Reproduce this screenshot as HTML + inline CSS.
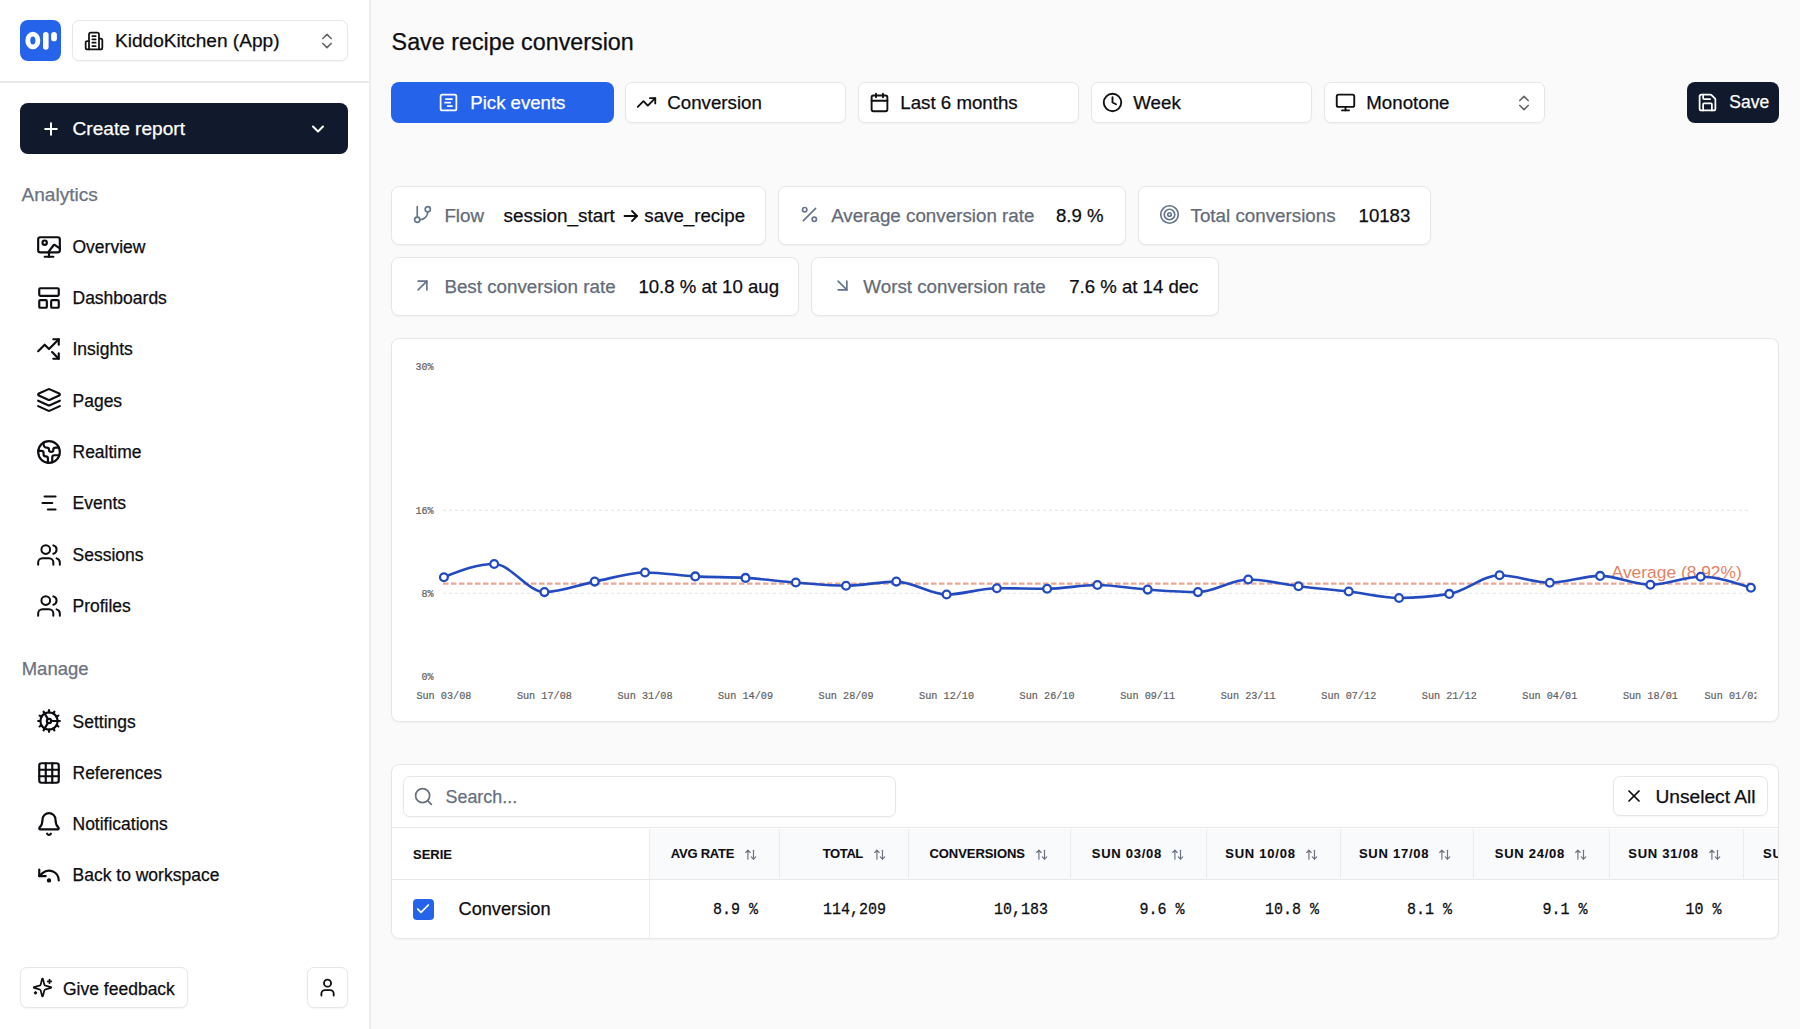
<!DOCTYPE html><html><head><meta charset="utf-8"><style>
*{box-sizing:border-box;margin:0;padding:0}
html,body{width:1800px;height:1029px;overflow:hidden;background:#fafafa;font-family:"Liberation Sans",sans-serif;color:#0b0b0f}
.abs{position:absolute}
svg{display:block}
.ic{position:absolute;fill:none;stroke:currentColor;stroke-width:2;stroke-linecap:round;stroke-linejoin:round;overflow:visible}
.txt{position:absolute;white-space:nowrap;line-height:1;-webkit-text-stroke:0.25px currentColor}
.box{position:absolute;background:#fff;border:1.5px solid #e7e7e7;border-radius:7px;box-shadow:0 1px 2px rgba(0,0,0,0.04)}
</style></head><body>
<div class="abs" style="left:0;top:0;width:371px;height:1029px;background:#fff;border-right:2px solid #ededed"></div>
<div class="abs" style="left:20px;top:20px;width:41px;height:41px;background:#2563eb;border-radius:8px"></div>
<svg class="abs" style="left:20px;top:20px" width="41" height="41" viewBox="0 0 41 41"><ellipse cx="12.85" cy="20.5" rx="5.0" ry="6.4" fill="none" stroke="#fff" stroke-width="4.9"/><rect x="23" y="11.9" width="5.6" height="17.9" rx="2.8" fill="#fff"/><rect x="31.1" y="11.9" width="5.8" height="9.4" rx="2.9" fill="#fff"/></svg>
<div class="box" style="left:72px;top:20px;width:276px;height:41px"></div>
<svg class="ic" style="left:83.6px;top:30.6px;width:20px;height:20px;color:#111;stroke-width:2.1" viewBox="0 0 24 24"><path d="M6 22V4a2 2 0 0 1 2-2h8a2 2 0 0 1 2 2v18Z"/><path d="M6 12H4a2 2 0 0 0-2 2v6a2 2 0 0 0 2 2h2"/><path d="M18 9h2a2 2 0 0 1 2 2v9a2 2 0 0 1-2 2h-2"/><path d="M10 6h4"/><path d="M10 10h4"/><path d="M10 14h4"/><path d="M10 18h4"/></svg>
<div class="txt" style="left:115px;top:31.23px;font-size:19.1px;color:#0d0d12;font-weight:normal;">KiddoKitchen (App)</div>
<svg class="ic" style="left:316.5px;top:30.6px;width:20px;height:20px;color:#666;stroke-width:2.0" viewBox="0 0 24 24"><path d="m7 15 5 5 5-5"/><path d="m7 9 5-5 5 5"/></svg>
<div class="abs" style="left:0;top:81px;width:369px;height:1.5px;background:#e8e8e8"></div>
<div class="abs" style="left:20px;top:103px;width:328px;height:51px;background:#111a2d;border-radius:8px"></div>
<svg class="ic" style="left:41px;top:119px;width:20px;height:20px;color:#fff;stroke-width:2.4" viewBox="0 0 24 24"><path d="M5 12h14"/><path d="M12 5v14"/></svg>
<div class="txt" style="left:72.5px;top:119.13px;font-size:19.1px;color:#fff;font-weight:normal;">Create report</div>
<svg class="ic" style="left:308px;top:119px;width:20px;height:20px;color:#fff;stroke-width:2.4" viewBox="0 0 24 24"><path d="m6 9 6 6 6-6"/></svg>
<div class="txt" style="left:21.5px;top:185.03px;font-size:19.1px;color:#6b7280;font-weight:normal;">Analytics</div>
<svg class="ic" style="left:35.9px;top:233.5px;width:26px;height:26px;color:#0d0d12;stroke-width:2.0" viewBox="0 0 24 24"><rect width="20" height="14" x="2" y="3" rx="2"/><circle cx="8" cy="8" r="2"/><path d="M11.2 17l4.8-6.4a1.2 1.2 0 0 1 1.9-.1L22 13.2"/><path d="M12 17v4"/><path d="M8 21h8"/></svg>
<div class="txt" style="left:72.5px;top:238.79px;font-size:17.5px;color:#0d0d12;font-weight:normal;">Overview</div>
<svg class="ic" style="left:35.9px;top:284.79999999999995px;width:26px;height:26px;color:#0d0d12;stroke-width:2.0" viewBox="0 0 24 24"><rect width="18" height="7" x="3" y="3" rx="1"/><rect width="7" height="7" x="3" y="14" rx="1"/><rect width="7" height="7" x="14" y="14" rx="1"/></svg>
<div class="txt" style="left:72.5px;top:290.09px;font-size:17.5px;color:#0d0d12;font-weight:normal;">Dashboards</div>
<svg class="ic" style="left:35.9px;top:336.09999999999997px;width:26px;height:26px;color:#0d0d12;stroke-width:2.0" viewBox="0 0 24 24"><path d="M14.828 14.828 21 21"/><path d="M21 16v5h-5"/><path d="m21 3-9 9-4-4-6 6"/><path d="M21 8V3h-5"/></svg>
<div class="txt" style="left:72.5px;top:341.39px;font-size:17.5px;color:#0d0d12;font-weight:normal;">Insights</div>
<svg class="ic" style="left:35.9px;top:387.4px;width:26px;height:26px;color:#0d0d12;stroke-width:2.0" viewBox="0 0 24 24"><path d="m12.83 2.18a2 2 0 0 0-1.66 0L2.6 6.08a1 1 0 0 0 0 1.83l8.58 3.91a2 2 0 0 0 1.66 0l8.58-3.9a1 1 0 0 0 0-1.83Z"/><path d="m22 17.65-9.17 4.16a2 2 0 0 1-1.66 0L2 17.65"/><path d="m22 12.65-9.17 4.16a2 2 0 0 1-1.66 0L2 12.65"/></svg>
<div class="txt" style="left:72.5px;top:392.69px;font-size:17.5px;color:#0d0d12;font-weight:normal;">Pages</div>
<svg class="ic" style="left:35.9px;top:438.69999999999993px;width:26px;height:26px;color:#0d0d12;stroke-width:2.0" viewBox="0 0 24 24"><path d="M21.54 15H17a2 2 0 0 0-2 2v4.54"/><path d="M7 3.34V5a3 3 0 0 0 3 3a2 2 0 0 1 2 2c0 1.1.9 2 2 2a2 2 0 0 0 2-2c0-1.1.9-2 2-2h3.17"/><path d="M11 21.95V18a2 2 0 0 0-2-2a2 2 0 0 1-2-2v-1a2 2 0 0 0-2-2H2.05"/><circle cx="12" cy="12" r="10"/></svg>
<div class="txt" style="left:72.5px;top:443.99px;font-size:17.5px;color:#0d0d12;font-weight:normal;">Realtime</div>
<svg class="ic" style="left:35.9px;top:490.0px;width:26px;height:26px;color:#0d0d12;stroke-width:2.0" viewBox="0 0 24 24"><path d="M8 6h10"/><path d="M6 12h9"/><path d="M11 18h7"/></svg>
<div class="txt" style="left:72.5px;top:495.29px;font-size:17.5px;color:#0d0d12;font-weight:normal;">Events</div>
<svg class="ic" style="left:35.7px;top:541.9px;width:26px;height:26px;color:#0d0d12;stroke-width:1.85" viewBox="0 0 24 24"><path d="M16 21v-2a4 4 0 0 0-4-4H6a4 4 0 0 0-4 4v2"/><circle cx="9" cy="7" r="4"/><path d="M22 21v-2a4 4 0 0 0-3-3.87"/><path d="M16 3.13a4 4 0 0 1 0 7.75"/></svg>
<div class="txt" style="left:72.5px;top:546.59px;font-size:17.5px;color:#0d0d12;font-weight:normal;">Sessions</div>
<svg class="ic" style="left:35.7px;top:593.1999999999999px;width:26px;height:26px;color:#0d0d12;stroke-width:1.85" viewBox="0 0 24 24"><path d="M16 21v-2a4 4 0 0 0-4-4H6a4 4 0 0 0-4 4v2"/><circle cx="9" cy="7" r="4"/><path d="M22 21v-2a4 4 0 0 0-3-3.87"/><path d="M16 3.13a4 4 0 0 1 0 7.75"/></svg>
<div class="txt" style="left:72.5px;top:597.89px;font-size:17.5px;color:#0d0d12;font-weight:normal;">Profiles</div>
<div class="txt" style="left:21.7px;top:659.84px;font-size:18.5px;color:#6b7280;font-weight:normal;">Manage</div>
<svg class="ic" style="left:35.9px;top:708.3px;width:26px;height:26px;color:#0d0d12;stroke-width:2.0" viewBox="0 0 24 24"><path d="M12 20a8 8 0 1 0 0-16 8 8 0 0 0 0 16Z"/><path d="M12 14a2 2 0 1 0 0-4 2 2 0 0 0 0 4Z"/><path d="M12 2v2"/><path d="M12 22v-2"/><path d="m17 20.66-1-1.73"/><path d="M11 10.27 7 3.34"/><path d="m20.66 17-1.73-1"/><path d="m3.34 7 1.73 1"/><path d="M14 12h8"/><path d="M2 12h2"/><path d="m20.66 7-1.73 1"/><path d="m3.34 17 1.73-1"/><path d="m17 3.34-1 1.73"/><path d="m11 13.73-4 6.93"/></svg>
<div class="txt" style="left:72.5px;top:713.59px;font-size:17.5px;color:#0d0d12;font-weight:normal;">Settings</div>
<svg class="ic" style="left:35.9px;top:759.5999999999999px;width:26px;height:26px;color:#0d0d12;stroke-width:2.0" viewBox="0 0 24 24"><rect width="18" height="18" x="3" y="3" rx="2"/><path d="M3 9h18"/><path d="M3 15h18"/><path d="M9 3v18"/><path d="M15 3v18"/></svg>
<div class="txt" style="left:72.5px;top:764.89px;font-size:17.5px;color:#0d0d12;font-weight:normal;">References</div>
<svg class="ic" style="left:35.9px;top:810.9px;width:26px;height:26px;color:#0d0d12;stroke-width:2.0" viewBox="0 0 24 24"><path d="M10.268 21a2 2 0 0 0 3.464 0"/><path d="M3.262 15.326A1 1 0 0 0 4 17h16a1 1 0 0 0 .74-1.673C19.41 13.956 18 12.499 18 8A6 6 0 0 0 6 8c0 4.499-1.411 5.956-2.738 7.326"/></svg>
<div class="txt" style="left:72.5px;top:816.19px;font-size:17.5px;color:#0d0d12;font-weight:normal;">Notifications</div>
<svg class="ic" style="left:35.9px;top:862.1999999999999px;width:26px;height:26px;color:#0d0d12;stroke-width:2.0" viewBox="0 0 24 24"><path d="M21 17a9 9 0 0 0-15-6.7L3 13"/><path d="M3 7v6h6"/><circle cx="12" cy="17" r="1"/></svg>
<div class="txt" style="left:72.5px;top:867.49px;font-size:17.5px;color:#0d0d12;font-weight:normal;">Back to workspace</div>
<div class="box" style="left:20px;top:967px;width:168px;height:41px"></div>
<svg class="ic" style="left:32px;top:977px;width:21px;height:21px;color:#111;stroke-width:2" viewBox="0 0 24 24"><path d="M9.937 15.5A2 2 0 0 0 8.5 14.063l-6.135-1.582a.5.5 0 0 1 0-.962L8.5 9.936A2 2 0 0 0 9.937 8.5l1.582-6.135a.5.5 0 0 1 .963 0L14.063 8.5A2 2 0 0 0 15.5 9.937l6.135 1.581a.5.5 0 0 1 0 .964L15.5 14.063a2 2 0 0 0-1.437 1.437l-1.582 6.135a.5.5 0 0 1-.963 0z"/><path d="M20 3v4"/><path d="M22 5h-4"/><path d="M4 17v2"/><path d="M5 18H3"/></svg>
<div class="txt" style="left:63px;top:981.19px;font-size:17.5px;color:#0d0d12;font-weight:normal;">Give feedback</div>
<div class="box" style="left:307px;top:967px;width:41px;height:41px"></div>
<svg class="ic" style="left:317.1px;top:976.9px;width:21.1px;height:21.1px;color:#111;stroke-width:2.1" viewBox="0 0 24 24"><path d="M19 21v-2a4 4 0 0 0-4-4H9a4 4 0 0 0-4 4v2"/><circle cx="12" cy="7" r="4"/></svg>
<div class="txt" style="left:391.6px;top:30.88px;font-size:23.3px;color:#0d0d12;font-weight:normal;">Save recipe conversion</div>
<div class="abs" style="left:391px;top:82px;width:223px;height:41px;background:#2563eb;border-radius:8px"></div>
<svg class="ic" style="left:438px;top:92px;width:21px;height:21px;color:#fff;stroke-width:2" viewBox="0 0 24 24"><rect width="18" height="18" x="3" y="3" rx="2"/><path d="M9 8h7"/><path d="M8 12h6"/><path d="M11 16h5"/></svg>
<div class="txt" style="left:470.3px;top:93.76px;font-size:18.6px;color:#fff;font-weight:normal;">Pick events</div>
<div class="box" style="left:625px;top:82px;width:221px;height:41px"></div>
<svg class="ic" style="left:636px;top:92px;width:21px;height:21px;color:#111;stroke-width:2.15" viewBox="0 0 24 24"><polyline points="22 7 13.5 15.5 8.5 10.5 2 17"/><polyline points="16 7 22 7 22 13"/></svg>
<div class="txt" style="left:667.3px;top:93.67px;font-size:18.7px;color:#0d0d12;font-weight:normal;">Conversion</div>
<div class="box" style="left:858px;top:82px;width:221px;height:41px"></div>
<svg class="ic" style="left:869px;top:92px;width:21px;height:21px;color:#111;stroke-width:2.15" viewBox="0 0 24 24"><path d="M8 2v4"/><path d="M16 2v4"/><rect width="18" height="18" x="3" y="4" rx="2"/><path d="M3 10h18"/></svg>
<div class="txt" style="left:900.3px;top:93.67px;font-size:18.7px;color:#0d0d12;font-weight:normal;">Last 6 months</div>
<div class="box" style="left:1091px;top:82px;width:221px;height:41px"></div>
<svg class="ic" style="left:1102px;top:92px;width:21px;height:21px;color:#111;stroke-width:2.15" viewBox="0 0 24 24"><circle cx="12" cy="12" r="10"/><polyline points="12 6 12 12 16 14"/></svg>
<div class="txt" style="left:1133.3px;top:93.67px;font-size:18.7px;color:#0d0d12;font-weight:normal;">Week</div>
<div class="box" style="left:1324px;top:82px;width:221px;height:41px"></div>
<svg class="ic" style="left:1335px;top:92px;width:21px;height:21px;color:#111;stroke-width:2.15" viewBox="0 0 24 24"><rect width="20" height="14" x="2" y="3" rx="2"/><line x1="8" x2="16" y1="21" y2="21"/><line x1="12" x2="12" y1="17" y2="21"/></svg>
<div class="txt" style="left:1366.3px;top:93.67px;font-size:18.7px;color:#0d0d12;font-weight:normal;">Monotone</div>
<svg class="ic" style="left:1514px;top:93.3px;width:20px;height:20px;color:#666;stroke-width:2.0" viewBox="0 0 24 24"><path d="m7 15 5 5 5-5"/><path d="m7 9 5-5 5 5"/></svg>
<div class="abs" style="left:1687px;top:82px;width:92px;height:41px;background:#111a2d;border-radius:8px"></div>
<svg class="ic" style="left:1697px;top:92px;width:21px;height:21px;color:#fff;stroke-width:2" viewBox="0 0 24 24"><path d="M15.2 3a2 2 0 0 1 1.4.6l3.8 3.8a2 2 0 0 1 .6 1.4V19a2 2 0 0 1-2 2H5a2 2 0 0 1-2-2V5a2 2 0 0 1 2-2z"/><path d="M17 21v-7a1 1 0 0 0-1-1H8a1 1 0 0 0-1 1v7"/><path d="M7 3v4a1 1 0 0 0 1 1h7"/></svg>
<div class="txt" style="left:1729.3px;top:94.49px;font-size:17.5px;color:#fff;font-weight:normal;">Save</div>
<div class="box" style="left:391px;top:186px;width:375px;height:59px;border-radius:8px"></div>
<svg class="ic" style="left:411.8px;top:204.3px;width:21px;height:21px;color:#64748b;stroke-width:1.9" viewBox="0 0 24 24"><line x1="6" x2="6" y1="3" y2="15"/><circle cx="18" cy="6" r="3"/><circle cx="6" cy="18" r="3"/><path d="M18 9a9 9 0 0 1-9 9"/></svg>
<div class="txt" style="left:444.4px;top:207.09px;font-size:18.8px;color:#636b78;font-weight:normal;">Flow</div>
<div class="box" style="left:778px;top:186px;width:348px;height:59px;border-radius:8px"></div>
<svg class="ic" style="left:798.8px;top:204.3px;width:21px;height:21px;color:#64748b;stroke-width:1.9" viewBox="0 0 24 24"><line x1="19" x2="5" y1="5" y2="19"/><circle cx="6.5" cy="6.5" r="2.5"/><circle cx="17.5" cy="17.5" r="2.5"/></svg>
<div class="txt" style="left:831.2px;top:207.09px;font-size:18.8px;color:#636b78;font-weight:normal;">Average conversion rate</div>
<div class="txt" style="left:1056px;top:207.26px;font-size:18.6px;color:#0d0d12;font-weight:normal;">8.9 %</div>
<div class="box" style="left:1138px;top:186px;width:293px;height:59px;border-radius:8px"></div>
<svg class="ic" style="left:1158.8px;top:204.3px;width:21px;height:21px;color:#64748b;stroke-width:1.9" viewBox="0 0 24 24"><circle cx="12" cy="12" r="10"/><circle cx="12" cy="12" r="6"/><circle cx="12" cy="12" r="2"/></svg>
<div class="txt" style="left:1190.5px;top:207.09px;font-size:18.8px;color:#636b78;font-weight:normal;">Total conversions</div>
<div class="txt" style="left:1358.6px;top:207.26px;font-size:18.6px;color:#0d0d12;font-weight:normal;">10183</div>
<div class="box" style="left:391px;top:257px;width:408px;height:59px;border-radius:8px"></div>
<svg class="ic" style="left:411.8px;top:275.3px;width:21px;height:21px;color:#64748b;stroke-width:1.9" viewBox="0 0 24 24"><path d="M7 7h10v10"/><path d="M7 17 17 7"/></svg>
<div class="txt" style="left:444.4px;top:278.09px;font-size:18.8px;color:#636b78;font-weight:normal;">Best conversion rate</div>
<div class="txt" style="left:638.4px;top:278.26px;font-size:18.6px;color:#0d0d12;font-weight:normal;">10.8 % at 10 aug</div>
<div class="box" style="left:811px;top:257px;width:408px;height:59px;border-radius:8px"></div>
<svg class="ic" style="left:831.8px;top:275.3px;width:21px;height:21px;color:#64748b;stroke-width:1.9" viewBox="0 0 24 24"><path d="m7 7 10 10"/><path d="M17 7v10H7"/></svg>
<div class="txt" style="left:863.3px;top:278.09px;font-size:18.8px;color:#636b78;font-weight:normal;">Worst conversion rate</div>
<div class="txt" style="left:1069.2px;top:278.26px;font-size:18.6px;color:#0d0d12;font-weight:normal;">7.6 % at 14 dec</div>
<div class="txt" style="left:503.5px;top:207.0px;font-size:18.9px;color:#0d0d12;font-weight:normal;">session_start</div>
<svg class="ic" style="left:623px;top:209px;width:16px;height:14px;color:#0d0d12;stroke-width:1.8" viewBox="0 0 16 14"><path d="M1.5 7h12.5"/><path d="M9 2l5 5-5 5"/></svg>
<div class="txt" style="left:644.3px;top:207.17px;font-size:18.7px;color:#0d0d12;font-weight:normal;">save_recipe</div>
<div class="box" style="left:391px;top:338px;width:1388px;height:384px;border-radius:8px"></div>
<svg class="abs" style="left:0;top:0;overflow:visible" width="1800" height="1029" viewBox="0 0 1800 1029"><defs><clipPath id="cc"><rect x="392" y="339" width="1364.5" height="382"/></clipPath></defs><g clip-path="url(#cc)"><line x1="443" x2="1751" y1="510.3" y2="510.3" stroke="#e8e8e8" stroke-width="1.2" stroke-dasharray="3 3"/><line x1="443" x2="1751" y1="593.3" y2="593.3" stroke="#e8e8e8" stroke-width="1.2" stroke-dasharray="3 3"/><line x1="443" x2="1751" y1="583.7" y2="583.7" stroke="#eba895" stroke-width="2.2" stroke-dasharray="5.5 2.5"/><text x="433.6" y="369.8" text-anchor="end" font-family="Liberation Mono" font-size="10" fill="#5f5f5f" stroke="#5f5f5f" stroke-width="0.2">30%</text><text x="433.6" y="513.8" text-anchor="end" font-family="Liberation Mono" font-size="10" fill="#5f5f5f" stroke="#5f5f5f" stroke-width="0.2">16%</text><text x="433.6" y="596.8" text-anchor="end" font-family="Liberation Mono" font-size="10" fill="#5f5f5f" stroke="#5f5f5f" stroke-width="0.2">8%</text><text x="433.6" y="679.8" text-anchor="end" font-family="Liberation Mono" font-size="10" fill="#5f5f5f" stroke="#5f5f5f" stroke-width="0.2">0%</text><text x="443.9" y="699.2" text-anchor="middle" font-family="Liberation Mono" font-size="10.2" fill="#5f5f5f" stroke="#5f5f5f" stroke-width="0.2">Sun 03/08</text><text x="544.4" y="699.2" text-anchor="middle" font-family="Liberation Mono" font-size="10.2" fill="#5f5f5f" stroke="#5f5f5f" stroke-width="0.2">Sun 17/08</text><text x="645.0" y="699.2" text-anchor="middle" font-family="Liberation Mono" font-size="10.2" fill="#5f5f5f" stroke="#5f5f5f" stroke-width="0.2">Sun 31/08</text><text x="745.5" y="699.2" text-anchor="middle" font-family="Liberation Mono" font-size="10.2" fill="#5f5f5f" stroke="#5f5f5f" stroke-width="0.2">Sun 14/09</text><text x="846.1" y="699.2" text-anchor="middle" font-family="Liberation Mono" font-size="10.2" fill="#5f5f5f" stroke="#5f5f5f" stroke-width="0.2">Sun 28/09</text><text x="946.6" y="699.2" text-anchor="middle" font-family="Liberation Mono" font-size="10.2" fill="#5f5f5f" stroke="#5f5f5f" stroke-width="0.2">Sun 12/10</text><text x="1047.1" y="699.2" text-anchor="middle" font-family="Liberation Mono" font-size="10.2" fill="#5f5f5f" stroke="#5f5f5f" stroke-width="0.2">Sun 26/10</text><text x="1147.7" y="699.2" text-anchor="middle" font-family="Liberation Mono" font-size="10.2" fill="#5f5f5f" stroke="#5f5f5f" stroke-width="0.2">Sun 09/11</text><text x="1248.2" y="699.2" text-anchor="middle" font-family="Liberation Mono" font-size="10.2" fill="#5f5f5f" stroke="#5f5f5f" stroke-width="0.2">Sun 23/11</text><text x="1348.8" y="699.2" text-anchor="middle" font-family="Liberation Mono" font-size="10.2" fill="#5f5f5f" stroke="#5f5f5f" stroke-width="0.2">Sun 07/12</text><text x="1449.3" y="699.2" text-anchor="middle" font-family="Liberation Mono" font-size="10.2" fill="#5f5f5f" stroke="#5f5f5f" stroke-width="0.2">Sun 21/12</text><text x="1549.8" y="699.2" text-anchor="middle" font-family="Liberation Mono" font-size="10.2" fill="#5f5f5f" stroke="#5f5f5f" stroke-width="0.2">Sun 04/01</text><text x="1650.4" y="699.2" text-anchor="middle" font-family="Liberation Mono" font-size="10.2" fill="#5f5f5f" stroke="#5f5f5f" stroke-width="0.2">Sun 18/01</text><text x="1704.5" y="699.2" font-family="Liberation Mono" font-size="10.2" fill="#5f5f5f" stroke="#5f5f5f" stroke-width="0.2">Sun 01/02</text><text x="1611.6" y="578.3" font-family="Liberation Sans" font-size="17.4" fill="#e38266">Average (8.92%)</text><path d="M443.90,577.20C460.66,570.60 477.41,564.00 494.17,564.00C510.93,564.00 527.68,592.10 544.44,592.10C561.19,592.10 577.95,584.87 594.71,581.60C611.46,578.33 628.22,572.50 644.98,572.50C661.73,572.50 678.49,575.50 695.25,576.40C712.00,577.30 728.76,576.90 745.52,577.90C762.27,578.90 779.03,581.20 795.78,582.50C812.54,583.80 829.30,585.70 846.05,585.70C862.81,585.70 879.57,581.60 896.32,581.60C913.08,581.60 929.84,594.50 946.59,594.50C963.35,594.50 980.11,588.20 996.86,588.20C1013.62,588.20 1030.37,588.70 1047.13,588.70C1063.89,588.70 1080.64,585.00 1097.40,585.00C1114.16,585.00 1130.91,588.42 1147.67,589.60C1164.43,590.78 1181.18,592.10 1197.94,592.10C1214.69,592.10 1231.45,579.50 1248.21,579.50C1264.96,579.50 1281.72,584.20 1298.48,586.20C1315.23,588.20 1331.99,589.53 1348.75,591.50C1365.50,593.47 1382.26,598.00 1399.02,598.00C1415.77,598.00 1432.53,596.63 1449.28,593.90C1466.04,591.17 1482.80,575.30 1499.55,575.30C1516.31,575.30 1533.07,582.70 1549.82,582.70C1566.58,582.70 1583.34,575.90 1600.09,575.90C1616.85,575.90 1633.61,584.80 1650.36,584.80C1667.12,584.80 1683.87,576.80 1700.63,576.80C1717.39,576.80 1734.14,582.25 1750.90,587.70" fill="none" stroke="#234bbf" stroke-width="2.6"/><circle cx="443.90" cy="577.20" r="3.9" fill="#fff" stroke="#234bbf" stroke-width="2.3"/><circle cx="494.17" cy="564.00" r="3.9" fill="#fff" stroke="#234bbf" stroke-width="2.3"/><circle cx="544.44" cy="592.10" r="3.9" fill="#fff" stroke="#234bbf" stroke-width="2.3"/><circle cx="594.71" cy="581.60" r="3.9" fill="#fff" stroke="#234bbf" stroke-width="2.3"/><circle cx="644.98" cy="572.50" r="3.9" fill="#fff" stroke="#234bbf" stroke-width="2.3"/><circle cx="695.25" cy="576.40" r="3.9" fill="#fff" stroke="#234bbf" stroke-width="2.3"/><circle cx="745.52" cy="577.90" r="3.9" fill="#fff" stroke="#234bbf" stroke-width="2.3"/><circle cx="795.78" cy="582.50" r="3.9" fill="#fff" stroke="#234bbf" stroke-width="2.3"/><circle cx="846.05" cy="585.70" r="3.9" fill="#fff" stroke="#234bbf" stroke-width="2.3"/><circle cx="896.32" cy="581.60" r="3.9" fill="#fff" stroke="#234bbf" stroke-width="2.3"/><circle cx="946.59" cy="594.50" r="3.9" fill="#fff" stroke="#234bbf" stroke-width="2.3"/><circle cx="996.86" cy="588.20" r="3.9" fill="#fff" stroke="#234bbf" stroke-width="2.3"/><circle cx="1047.13" cy="588.70" r="3.9" fill="#fff" stroke="#234bbf" stroke-width="2.3"/><circle cx="1097.40" cy="585.00" r="3.9" fill="#fff" stroke="#234bbf" stroke-width="2.3"/><circle cx="1147.67" cy="589.60" r="3.9" fill="#fff" stroke="#234bbf" stroke-width="2.3"/><circle cx="1197.94" cy="592.10" r="3.9" fill="#fff" stroke="#234bbf" stroke-width="2.3"/><circle cx="1248.21" cy="579.50" r="3.9" fill="#fff" stroke="#234bbf" stroke-width="2.3"/><circle cx="1298.48" cy="586.20" r="3.9" fill="#fff" stroke="#234bbf" stroke-width="2.3"/><circle cx="1348.75" cy="591.50" r="3.9" fill="#fff" stroke="#234bbf" stroke-width="2.3"/><circle cx="1399.02" cy="598.00" r="3.9" fill="#fff" stroke="#234bbf" stroke-width="2.3"/><circle cx="1449.28" cy="593.90" r="3.9" fill="#fff" stroke="#234bbf" stroke-width="2.3"/><circle cx="1499.55" cy="575.30" r="3.9" fill="#fff" stroke="#234bbf" stroke-width="2.3"/><circle cx="1549.82" cy="582.70" r="3.9" fill="#fff" stroke="#234bbf" stroke-width="2.3"/><circle cx="1600.09" cy="575.90" r="3.9" fill="#fff" stroke="#234bbf" stroke-width="2.3"/><circle cx="1650.36" cy="584.80" r="3.9" fill="#fff" stroke="#234bbf" stroke-width="2.3"/><circle cx="1700.63" cy="576.80" r="3.9" fill="#fff" stroke="#234bbf" stroke-width="2.3"/><circle cx="1750.90" cy="587.70" r="3.9" fill="#fff" stroke="#234bbf" stroke-width="2.3"/></g></svg>
<div class="box" style="left:391px;top:764px;width:1388px;height:175px;border-radius:8px;overflow:hidden">
</div>
<div class="box" style="left:402.5px;top:776px;width:493px;height:40.5px"></div>
<svg class="ic" style="left:413px;top:786px;width:21px;height:21px;color:#667080;stroke-width:1.95" viewBox="0 0 24 24"><circle cx="11" cy="11" r="8"/><path d="m21 21-4.3-4.3"/></svg>
<div class="txt" style="left:445.5px;top:789.25px;font-size:17.9px;color:#667080;font-weight:normal;">Search...</div>
<div class="box" style="left:1612.5px;top:776px;width:155px;height:40px"></div>
<svg class="ic" style="left:1624px;top:786px;width:20px;height:20px;color:#111;stroke-width:2.1" viewBox="0 0 24 24"><path d="M18 6 6 18"/><path d="m6 6 12 12"/></svg>
<div class="txt" style="left:1655.4px;top:786.65px;font-size:19.2px;color:#0d0d12;font-weight:normal;">Unselect All</div>
<div class="abs" style="left:392px;top:827px;width:1386px;height:1.2px;background:#e9e9e9"></div>
<div class="abs" style="left:649.5px;top:828.5px;width:1128.5px;height:51px;background:#f9fafb"></div>
<div class="abs" style="left:392px;top:879.2px;width:1386px;height:1.2px;background:#e9e9e9"></div>
<div class="abs" style="left:649px;top:828.5px;width:1.2px;height:110px;background:#ececec"></div>
<div class="abs" style="left:779px;top:828.5px;width:1.2px;height:51px;background:#ececec"></div>
<div class="abs" style="left:908px;top:828.5px;width:1.2px;height:51px;background:#ececec"></div>
<div class="abs" style="left:1069.7px;top:828.5px;width:1.2px;height:51px;background:#ececec"></div>
<div class="abs" style="left:1206px;top:828.5px;width:1.2px;height:51px;background:#ececec"></div>
<div class="abs" style="left:1339.6px;top:828.5px;width:1.2px;height:51px;background:#ececec"></div>
<div class="abs" style="left:1473.2px;top:828.5px;width:1.2px;height:51px;background:#ececec"></div>
<div class="abs" style="left:1609px;top:828.5px;width:1.2px;height:51px;background:#ececec"></div>
<div class="abs" style="left:1742.6px;top:828.5px;width:1.2px;height:51px;background:#ececec"></div>
<div class="txt" style="left:413px;top:848.2px;font-size:13px;color:#0d0d12;font-weight:bold;letter-spacing:0px;-webkit-text-stroke:0.1px currentColor">SERIE</div>
<div class="txt" style="right:1065.95px;top:847.00px;font-size:13px;font-weight:bold;color:#0d0d12;letter-spacing:-0.25px;-webkit-text-stroke:0.1px currentColor">AVG RATE</div>
<svg class="ic" style="left:744px;top:847.6px;width:13.4px;height:13.4px;color:#6b7280;stroke-width:2.1" viewBox="0 0 24 24"><path d="m21 16-4 4-4-4"/><path d="M17 20V4"/><path d="m3 8 4-4 4 4"/><path d="M7 4v16"/></svg>
<div class="txt" style="right:937.1px;top:847.00px;font-size:13px;font-weight:bold;color:#0d0d12;letter-spacing:-0.4px;-webkit-text-stroke:0.1px currentColor">TOTAL</div>
<svg class="ic" style="left:873px;top:847.6px;width:13.4px;height:13.4px;color:#6b7280;stroke-width:2.1" viewBox="0 0 24 24"><path d="m21 16-4 4-4-4"/><path d="M17 20V4"/><path d="m3 8 4-4 4 4"/><path d="M7 4v16"/></svg>
<div class="txt" style="right:775.05px;top:847.00px;font-size:13px;font-weight:bold;color:#0d0d12;letter-spacing:-0.05px;-webkit-text-stroke:0.1px currentColor">CONVERSIONS</div>
<svg class="ic" style="left:1034.7px;top:847.6px;width:13.4px;height:13.4px;color:#6b7280;stroke-width:2.1" viewBox="0 0 24 24"><path d="m21 16-4 4-4-4"/><path d="M17 20V4"/><path d="m3 8 4-4 4 4"/><path d="M7 4v16"/></svg>
<div class="txt" style="right:637.95px;top:847.00px;font-size:13px;font-weight:bold;color:#0d0d12;letter-spacing:0.75px;-webkit-text-stroke:0.1px currentColor">SUN 03/08</div>
<svg class="ic" style="left:1171px;top:847.6px;width:13.4px;height:13.4px;color:#6b7280;stroke-width:2.1" viewBox="0 0 24 24"><path d="m21 16-4 4-4-4"/><path d="M17 20V4"/><path d="m3 8 4-4 4 4"/><path d="M7 4v16"/></svg>
<div class="txt" style="right:504.3500000000001px;top:847.00px;font-size:13px;font-weight:bold;color:#0d0d12;letter-spacing:0.75px;-webkit-text-stroke:0.1px currentColor">SUN 10/08</div>
<svg class="ic" style="left:1304.6px;top:847.6px;width:13.4px;height:13.4px;color:#6b7280;stroke-width:2.1" viewBox="0 0 24 24"><path d="m21 16-4 4-4-4"/><path d="M17 20V4"/><path d="m3 8 4-4 4 4"/><path d="M7 4v16"/></svg>
<div class="txt" style="right:370.74999999999994px;top:847.00px;font-size:13px;font-weight:bold;color:#0d0d12;letter-spacing:0.75px;-webkit-text-stroke:0.1px currentColor">SUN 17/08</div>
<svg class="ic" style="left:1438.2px;top:847.6px;width:13.4px;height:13.4px;color:#6b7280;stroke-width:2.1" viewBox="0 0 24 24"><path d="m21 16-4 4-4-4"/><path d="M17 20V4"/><path d="m3 8 4-4 4 4"/><path d="M7 4v16"/></svg>
<div class="txt" style="right:234.95px;top:847.00px;font-size:13px;font-weight:bold;color:#0d0d12;letter-spacing:0.75px;-webkit-text-stroke:0.1px currentColor">SUN 24/08</div>
<svg class="ic" style="left:1574px;top:847.6px;width:13.4px;height:13.4px;color:#6b7280;stroke-width:2.1" viewBox="0 0 24 24"><path d="m21 16-4 4-4-4"/><path d="M17 20V4"/><path d="m3 8 4-4 4 4"/><path d="M7 4v16"/></svg>
<div class="txt" style="right:101.3500000000001px;top:847.00px;font-size:13px;font-weight:bold;color:#0d0d12;letter-spacing:0.75px;-webkit-text-stroke:0.1px currentColor">SUN 31/08</div>
<svg class="ic" style="left:1707.6px;top:847.6px;width:13.4px;height:13.4px;color:#6b7280;stroke-width:2.1" viewBox="0 0 24 24"><path d="m21 16-4 4-4-4"/><path d="M17 20V4"/><path d="m3 8 4-4 4 4"/><path d="M7 4v16"/></svg>
<div class="txt" style="left:1763px;top:847px;-webkit-text-stroke:0.1px currentColor;letter-spacing:0.75px;font-size:13px;font-weight:bold;color:#0d0d12;width:15px;overflow:hidden">SU</div>
<div class="abs" style="left:413px;top:899px;width:20.5px;height:20.5px;background:#2563eb;border-radius:4px"></div>
<svg class="ic" style="left:415.2px;top:901.2px;width:16px;height:16px;color:#fff;stroke-width:2.6" viewBox="0 0 24 24"><path d="M20 6 9 17l-5-5"/></svg>
<div class="txt" style="left:458.5px;top:899.99px;font-size:18.2px;color:#0d0d12;font-weight:normal;">Conversion</div>
<div class="txt" style="right:1042px;top:902.90px;font-size:15px;font-family:'Liberation Mono';color:#0d0d12;transform:scaleY(1.15);transform-origin:50% 84%">8.9 %</div>
<div class="txt" style="right:914px;top:902.90px;font-size:15px;font-family:'Liberation Mono';color:#0d0d12;transform:scaleY(1.15);transform-origin:50% 84%">114,209</div>
<div class="txt" style="right:752px;top:902.90px;font-size:15px;font-family:'Liberation Mono';color:#0d0d12;transform:scaleY(1.15);transform-origin:50% 84%">10,183</div>
<div class="txt" style="right:615.4000000000001px;top:902.90px;font-size:15px;font-family:'Liberation Mono';color:#0d0d12;transform:scaleY(1.15);transform-origin:50% 84%">9.6 %</div>
<div class="txt" style="right:481px;top:902.90px;font-size:15px;font-family:'Liberation Mono';color:#0d0d12;transform:scaleY(1.15);transform-origin:50% 84%">10.8 %</div>
<div class="txt" style="right:348px;top:902.90px;font-size:15px;font-family:'Liberation Mono';color:#0d0d12;transform:scaleY(1.15);transform-origin:50% 84%">8.1 %</div>
<div class="txt" style="right:212.5px;top:902.90px;font-size:15px;font-family:'Liberation Mono';color:#0d0d12;transform:scaleY(1.15);transform-origin:50% 84%">9.1 %</div>
<div class="txt" style="right:78.5px;top:902.90px;font-size:15px;font-family:'Liberation Mono';color:#0d0d12;transform:scaleY(1.15);transform-origin:50% 84%">10 %</div>
</body></html>
